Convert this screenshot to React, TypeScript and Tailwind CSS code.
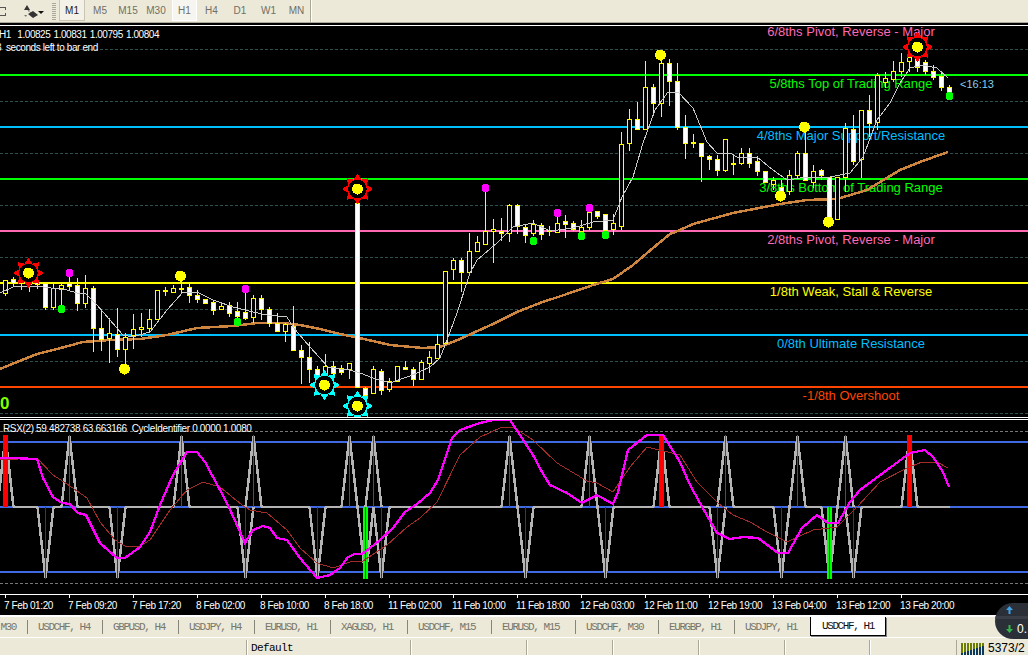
import React from "react";

type C = [number, number, number, number, number];
// high, low, bodyTop, bodyBottom, white(1)/hollow(0); bar i sits at x = 5 + 8i
const candles: C[] = [
  [280, 296, 280, 293, 0], [277, 286, 279, 283, 1], [274, 290, 278, 283, 1], [272, 292, 280, 284, 0], [282, 289, 282, 284, 1],
  [283, 310, 283, 307, 1], [283, 310, 288, 307, 0], [283, 307, 285, 288, 0], [273, 290, 283, 286, 1], [278, 311, 285, 303, 1],
  [275, 308, 288, 303, 0], [286, 352, 288, 328, 1], [309, 351, 328, 339, 1], [318, 363, 333, 338, 0], [308, 357, 334, 349, 1],
  [333, 369, 337, 349, 0], [314, 349, 329, 335, 0], [313, 337, 327, 329, 0], [309, 332, 319, 328, 0], [290, 319, 290, 319, 0],
  [287, 296, 290, 291, 0], [285, 292, 288, 292, 0], [276, 293, 288, 289, 0], [284, 303, 287, 295, 1], [290, 303, 295, 299, 1],
  [299, 303, 299, 303, 1], [301, 315, 302, 310, 1], [302, 309, 306, 309, 0], [302, 317, 305, 313, 1], [302, 320, 311, 316, 1],
  [289, 320, 312, 318, 1], [295, 323, 298, 317, 0], [295, 320, 298, 309, 1], [307, 327, 309, 323, 1], [313, 331, 323, 331, 1],
  [323, 342, 324, 331, 0], [306, 351, 326, 350, 1], [345, 384, 350, 357, 1], [342, 383, 357, 369, 1], [366, 383, 369, 376, 1],
  [354, 380, 366, 373, 0], [361, 380, 366, 373, 1], [365, 375, 368, 372, 1], [363, 379, 363, 369, 0], [203, 387, 203, 387, 1],
  [387, 395, 388, 395, 1], [366, 393, 369, 393, 0], [369, 395, 371, 390, 1], [378, 392, 381, 389, 0], [366, 381, 366, 381, 0],
  [361, 369, 367, 369, 1], [367, 386, 369, 379, 1], [360, 379, 362, 379, 0], [351, 373, 357, 363, 0], [334, 358, 344, 358, 0],
  [271, 343, 271, 343, 0], [258, 280, 260, 269, 0], [258, 292, 260, 272, 1], [233, 273, 251, 272, 0], [236, 251, 242, 251, 0],
  [188, 244, 231, 244, 0], [219, 263, 229, 231, 0], [218, 241, 231, 233, 1], [204, 242, 205, 233, 0], [204, 234, 205, 226, 1],
  [224, 243, 227, 235, 1], [220, 236, 224, 233, 0], [223, 240, 225, 234, 1], [226, 236, 230, 231, 0], [213, 233, 223, 232, 0],
  [215, 238, 221, 224, 1], [221, 231, 223, 229, 1], [220, 236, 227, 231, 0], [208, 230, 212, 227, 0], [211, 219, 211, 216, 1],
  [214, 235, 214, 230, 1], [214, 235, 223, 229, 0], [132, 230, 144, 226, 0], [109, 151, 119, 143, 0], [102, 129, 119, 129, 1],
  [61, 129, 87, 129, 0], [84, 115, 87, 103, 1], [55, 117, 63, 103, 0], [59, 106, 63, 81, 1], [63, 130, 81, 127, 1],
  [115, 159, 127, 143, 1], [134, 148, 142, 143, 0], [143, 182, 143, 156, 1], [155, 170, 156, 159, 1], [155, 176, 159, 170, 1],
  [139, 172, 139, 170, 0], [155, 175, 163, 163, 0], [148, 165, 153, 163, 0], [148, 168, 153, 163, 1], [156, 176, 161, 171, 1],
  [171, 182, 171, 182, 1], [177, 190, 180, 184, 0], [180, 196, 187, 191, 1], [170, 195, 175, 191, 0], [151, 178, 153, 175, 0],
  [127, 180, 153, 180, 1], [165, 188, 171, 182, 0], [169, 180, 170, 175, 1], [177, 222, 177, 220, 1], [177, 219, 177, 219, 0],
  [123, 192, 128, 177, 0], [115, 165, 129, 161, 1], [110, 178, 110, 159, 0], [95, 137, 110, 123, 1], [73, 130, 75, 122, 0],
  [72, 88, 78, 82, 0], [61, 82, 71, 79, 0], [53, 77, 62, 71, 0], [43, 72, 57, 61, 0], [47, 72, 50, 67, 1],
  [60, 75, 62, 71, 1], [65, 80, 71, 77, 1], [72, 91, 76, 87, 1], [85, 96, 87, 93, 1],
];

const thinMA = "0,293 13,287 22,286 43,287 67,290 77,293 85,293 97,305 110,320 123,335 132,337 150,332 167,310 183,292 197,292 213,300 233,307 253,312 267,315 287,317 293,327 310,347 328,367 340,369 350,370 360,373 373,378 390,383 410,376 430,367 440,358 447,340 457,313 470,273 477,260 497,243 513,227 533,223 550,231 573,228 593,222 613,220 622,197 633,177 643,143 655,110 668,92 678,92 693,108 707,142 717,153 730,153 737,157 757,157 773,170 787,180 807,177 830,177 850,173 863,157 877,120 890,103 900,83 910,68 923,65 937,68 948,78";
const slowMA = "0,369 17,362 37,354 57,349 83,342 110,340 140,339 167,335 197,328 233,326 257,323 283,323 300,325 320,329 340,334 373,341 390,345 423,348 440,347 460,339 473,333 493,324 517,312 540,303 567,294 593,285 613,279 633,265 653,248 670,234 680,230 693,224 733,213 780,204 807,200 837,199 867,190 900,170 920,162 948,152";
const rsx = "0,458 10,458 37,459 43,478 53,497 62,503 70,504 78,513 86,515 100,543 117,558 125,558 140,547 150,532 160,505 173,475 187,452 197,452 205,462 227,503 245,543 253,530 263,526 270,528 277,538 287,540 300,558 317,578 330,575 340,568 348,557 355,554 362,554 370,548 380,540 393,528 405,512 417,504 430,493 438,480 452,438 460,430 480,423 493,420 510,420 520,435 533,455 542,472 550,485 567,493 582,503 597,495 613,504 618,492 628,450 647,435 663,435 680,462 690,485 700,503 717,533 730,539 743,537 758,538 778,553 788,553 802,528 817,515 828,523 838,523 850,502 860,490 883,473 910,453 925,450 933,457 943,472 949,487";
const signal = "0,460 37,458 53,475 67,484 87,498 100,522 115,540 125,546 140,546 150,540 170,510 187,490 203,482 220,487 242,505 250,510 267,513 287,530 300,548 317,563 333,568 350,562 363,561 387,545 407,527 420,518 437,502 460,455 480,437 500,428 513,427 533,440 557,463 587,481 597,483 613,492 630,467 647,447 680,455 697,482 718,503 733,515 750,522 767,532 787,542 813,530 837,527 857,507 880,482 907,468 922,462 937,462 948,468";

const levels = [
  { y: 74, c: "#00ff00" }, { y: 126, c: "#00bfff" }, { y: 178, c: "#00ff00" }, { y: 230, c: "#ff69b4" },
  { y: 282, c: "#ffff00" }, { y: 334, c: "#00bfff" }, { y: 386, c: "#ff4500" },
];
const labels = [
  { t: "6/8ths Pivot, Reverse - Major", y: 36, c: "#ff69b4" },
  { t: "5/8ths Top of Trading Range", y: 88, c: "#00ff00" },
  { t: "4/8ths Major Support/Resistance", y: 140, c: "#00bfff" },
  { t: "3/8ths Bottom of Trading Range", y: 192, c: "#00ff00" },
  { t: "2/8ths Pivot, Reverse - Major", y: 244, c: "#ff69b4" },
  { t: "1/8th Weak, Stall & Reverse", y: 296, c: "#ffff00" },
  { t: "0/8th Ultimate Resistance", y: 348, c: "#00bfff" },
  { t: "-1/8th Overshoot", y: 400, c: "#ff4500" },
];
const dots = [
  [61, 309, "#00ff00", 4], [69, 273, "#ff00ff", 4], [124, 369, "#ffff00", 5.5], [180, 276, "#ffff00", 5.5], [237, 322, "#00ff00", 4],
  [245, 289, "#ff00ff", 4], [485, 188, "#ff00ff", 4], [533, 241, "#00ff00", 4], [557, 213, "#ff00ff", 4], [581, 236, "#00ff00", 4],
  [589, 208, "#ff00ff", 4], [605, 235, "#00ff00", 4], [660, 55, "#ffff00", 5.5], [780, 196, "#ffff00", 5.5], [804, 127, "#ffff00", 5.5],
  [828, 222, "#ffff00", 5.5], [949, 96, "#00ff00", 4],
] as [number, number, string, number][];
const suns: [number, number, string][] = [
  [28, 273, "#ff0000"], [357, 189, "#ff0000"], [917, 47, "#ff0000"], [324, 385, "#00ffff"], [357, 406, "#00ffff"],
];

function starPoints(cx: number, cy: number) {
  const out: string[] = [];
  for (let i = 0; i < 16; i++) {
    const r = i % 2 === 0 ? 15.5 : 10;
    const a = (i * Math.PI) / 8 - Math.PI / 2;
    out.push(`${cx + r * Math.cos(a)},${cy + r * Math.sin(a)}`);
  }
  return out.join(" ");
}

const upTops = [5, 69, 181, 253, 349, 373, 509, 589, 661, 725, 797, 845, 909];
const downTips = [45, 117, 245, 317, 365, 381, 525, 605, 717, 781, 829, 853];
const ticks = [
  [5, "7 Feb 01:20"], [69, "7 Feb 09:20"], [133, "7 Feb 17:20"], [197, "8 Feb 02:00"], [261, "8 Feb 10:00"],
  [325, "8 Feb 18:00"], [389, "11 Feb 02:00"], [453, "11 Feb 10:00"], [517, "11 Feb 18:00"], [581, "12 Feb 03:00"],
  [645, "12 Feb 11:00"], [709, "12 Feb 19:00"], [773, "13 Feb 04:00"], [837, "13 Feb 12:00"], [901, "13 Feb 20:00"],
] as [number, string][];
const tabs: [string, number][] = [
  ["USDCHF, H4", 75], ["GBPUSD, H4", 76], ["USDJPY, H4", 76], ["EURUSD, H1", 76], ["XAGUSD, H1", 77],
  ["USDCHF, M15", 84], ["EURUSD, M15", 84], ["USDCHF, M30", 83], ["EURGBP, H1", 76], ["USDJPY, H1", 76],
];
const periods: [string, string][] = [
  ["M5", "w-[28px]"], ["M15", "w-[28px]"], ["M30", "w-[28px]"],
];
const periods2: [string, string][] = [
  ["H4", "w-[29px]"], ["D1", "w-[28px]"], ["W1", "w-[29px]"], ["MN", "w-[27px]"],
];
const cols = ["w-[246px]", "w-[164px]", "w-[116px]", "w-[86px]", "w-[86px]", "w-[86px]", "w-[85px]", "w-[87px]"];

const sans = "font-['Liberation_Sans',Arial,sans-serif]";

function Toolbar() {
  return (
    <div className={`flex h-[23px] shrink-0 items-start border-b border-[#aca899] bg-[#ece9d8] text-[10px] text-[#716f64] ${sans}`}>
      <div className="mt-[7px] h-[9px] w-[6px] border-y border-r border-dashed border-[#555]" />
      <svg className="ml-[14px] mt-[3px] h-[16px] w-[24px]" viewBox="0 0 24 16">
        <path d="M6 5l6 6" fill="none" stroke="#888" strokeWidth="1.5" strokeDasharray="2 1" />
        <path d="M4 7l3-5 3 5zM8 11l5-3 5 4-5 3z" fill="#333" />
        <path d="M4 12l3 0-1 2z" fill="#777" />
        <path d="M18 8h6l-3 3z" fill="#111" />
      </svg>
      <div className="ml-[8px] mt-[2px] h-[18px] w-[4px] bg-[repeating-linear-gradient(0deg,#aca899_0,#aca899_1px,#ece9d8_1px,#ece9d8_2px)]" />
      <div className="ml-[3px] flex h-[21px] w-[26px] items-center justify-center border border-t-0 border-[#c8c5b2] bg-[#f4f2e8] text-[#222]">M1</div>
      {periods.map(([t, w]) => (
        <div key={t} className={`flex h-[21px] items-center justify-center pl-[2px] ${w}`}>{t}</div>
      ))}
      <div className="ml-[3px] flex h-[21px] w-[25px] items-center justify-center border border-t-0 border-white bg-[#f6f5ef]">H1</div>
      {periods2.map(([t, w]) => (
        <div key={t} className={`flex h-[21px] items-center justify-center ${w}`}>{t}</div>
      ))}
      <div className="h-[22px] w-[2px] border-l border-r border-l-[#aca899] border-r-white" />
    </div>
  );
}

function MainChart() {
  return (
    <div className="relative h-[391px] shrink-0 overflow-hidden bg-black">
      <svg className="block h-[391px] w-[1028px]" viewBox="0 26 1028 391" shapeRendering="crispEdges">
        {[49, 101, 153, 205, 257, 309, 361, 413].map((y) => (
          <line key={y} x1="0" x2="1028" y1={y + 0.5} y2={y + 0.5} stroke="#2f4f4f" strokeDasharray="3 2" />
        ))}
        {levels.map((l) => (
          <rect key={l.y} x="0" y={l.y} width="1028" height="2" fill={l.c} />
        ))}
        {labels.map((l) => (
          <text key={l.t} x="851" y={l.y} textAnchor="middle" fill={l.c} fontSize="13" fontFamily="'Liberation Sans',Arial,sans-serif">
            {l.t}
          </text>
        ))}
        <text x="960" y="88" fill="#87ceeb" fontSize="11" fontFamily="'Liberation Sans',Arial,sans-serif">&lt;16:13</text>
        <text x="0" y="409" fill="#7fff00" fontSize="17" fontWeight="bold" fontFamily="'Liberation Sans',Arial,sans-serif">0</text>
        <polyline points={slowMA} fill="none" stroke="#cd853f" strokeWidth="2.5" />
        {candles.map((c, i) => {
          const x = 5 + 8 * i;
          return (
            <g key={i}>
              <line x1={x + 0.5} x2={x + 0.5} y1={c[0]} y2={c[1]} stroke="#ffff00" />
              <rect x={x - 1.5} y={c[2] + 0.5} width="4" height={Math.max(c[3] - c[2], 1)} fill={c[4] ? "#ffffff" : "#000000"} stroke="#ffff00" />
            </g>
          );
        })}
        <polyline points={thinMA} fill="none" stroke="#c8c8c8" strokeWidth="1" />
        {dots.map(([x, y, c, r], i) => (
          <circle key={i} cx={x + 0.5} cy={y} r={r} fill={c} />
        ))}
        {suns.map(([x, y, c], i) => (
          <g key={i}>
            <polygon points={starPoints(x + 0.5, y)} fill={c} />
            <circle cx={x + 0.5} cy={y} r="9.3" fill="#000" />
            <circle cx={x + 0.5} cy={y} r="5.5" fill="#ffff00" />
          </g>
        ))}
      </svg>
      <div className={`absolute left-[-1px] top-[2px] text-[10px] leading-[13px] tracking-[-0.45px] text-white ${sans}`}>
        <div className="whitespace-pre [word-spacing:0.9px]">H1  1.00825 1.00831 1.00795 1.00804</div>
        <div className="ml-[-3px] whitespace-pre tracking-[-0.4px]">3  seconds left to bar end</div>
      </div>
    </div>
  );
}

function IndicatorPanel() {
  return (
    <div className="relative h-[174px] shrink-0 overflow-hidden bg-black">
      <svg className="block h-[174px] w-[1028px]" viewBox="0 420 1028 174" shapeRendering="crispEdges">
        {[431, 583].map((y) => (
          <line key={y} x1="0" x2="1028" y1={y + 0.5} y2={y + 0.5} stroke="#777" strokeDasharray="3 2" />
        ))}
        {[441, 506, 571].map((y) => (
          <rect key={y} x="0" y={y} width="1028" height="2" fill="#4169e1" />
        ))}
        <rect x="0" y="506" width="950" height="2" fill="#b4b4b4" />
        {[...upTops, ...downTips].map((x) => (
          <rect key={x} x={x - 7} y="506" width="15" height="2" fill="#4169e1" />
        ))}
        {upTops.map((x) => (
          <g key={x}>
            <polyline points={`${x - 7.5},507 ${x + 0.5},436 ${x + 8.5},507`} fill="none" stroke="#b4b4b4" strokeWidth="2.5" />
            <line x1={x + 0.5} x2={x + 0.5} y1="435" y2="507" stroke="#a52a2a" />
          </g>
        ))}
        {downTips.map((x) => (
          <g key={x}>
            <polyline points={`${x - 7.5},507 ${x + 0.5},578 ${x + 8.5},507`} fill="none" stroke="#b4b4b4" strokeWidth="2.5" />
            <line x1={x + 0.5} x2={x + 0.5} y1="507" y2="579" stroke="#006400" />
          </g>
        ))}
        {[5, 661, 909].map((x) => (
          <rect key={x} x={x - 2} y="435" width="5" height="72" fill="#ff0000" />
        ))}
        {[365, 829].map((x) => (
          <g key={x}>
            <rect x={x - 2} y="507" width="5" height="72" fill="#00ff00" />
            <rect x={x} y="507" width="1" height="72" fill="#006400" />
          </g>
        ))}
        <polyline points={signal} fill="none" stroke="#a52a2a" strokeWidth="1" />
        <polyline points={rsx} fill="none" stroke="#ff00ff" strokeWidth="2.3" />
      </svg>
      <div className={`absolute left-[3px] top-[2px] whitespace-pre text-[10px] leading-[13px] tracking-[-0.35px] text-white ${sans}`}>
        RSX(2) 59.482738 63.663166  CycleIdentifier 0.0000 1.0080
      </div>
    </div>
  );
}

function TimeAxis() {
  return (
    <div className={`flex h-[21px] shrink-0 items-start border-t border-white bg-black text-[10px] tracking-[-0.4px] text-white ${sans}`}>
      <div className="w-[5px] shrink-0" />
      {ticks.map(([x, t]) => (
        <div key={x} className="w-[64px] shrink-0">
          <div className="h-[3px] w-px bg-white" />
          <div className="ml-[-1px] mt-[1px] whitespace-pre leading-[13px]">{t}</div>
        </div>
      ))}
    </div>
  );
}

function Tabs() {
  return (
    <div className="flex h-[20px] shrink-0 items-center overflow-hidden bg-[#ece9d8] font-['Liberation_Mono',monospace] text-[11px] tracking-[-1.4px] text-[#77776c]">
      <div className="flex h-full w-[27px] shrink-0 items-center justify-end pr-[11px]">M30</div>
      {tabs.map(([t, w]) => (
        <div key={t} className="flex h-full shrink-0 items-center" style={{ width: w }}>
          <div className="h-[14px] w-px shrink-0 bg-[#85857a]" />
          <div className="ml-[10px] whitespace-pre">{t}</div>
        </div>
      ))}
      <div className="flex h-[19px] w-[76px] shrink-0 items-center justify-center self-start border-x border-b border-black bg-white text-[#111] shadow-[1px_1px_0_#808080]">
        USDCHF, H1
      </div>
    </div>
  );
}

function StatusBar() {
  return (
    <div className="flex h-[18px] shrink-0 border-t border-white bg-[#ece9d8] pt-[2px] text-black">
      {cols.map((w, i) => (
        <div
          key={i}
          className={`h-full shrink-0 ${w} ${i === 0 ? "" : "border-l border-l-[#aca899] shadow-[inset_1px_0_0_#fff]"} pl-[4px] font-['Liberation_Mono',monospace] text-[11px] leading-[16px] tracking-[-0.6px]`}
        >
          {i === 1 ? "Default" : ""}
        </div>
      ))}
      <div className={`flex flex-1 items-start gap-[4px] border-l border-l-[#aca899] pl-[4px] pt-[1px] text-[12px] leading-[14px] ${sans}`}>
        <svg className="h-[14px] w-[23px] shrink-0" viewBox="0 0 23 14" shapeRendering="crispEdges">
          {[0, 1, 2, 3, 4, 5, 6, 7].map((i) => (
            <g key={i}>
              <rect x={i * 3} y="2" width="2" height={10 - i} fill="#6b7d00" />
              <rect x={i * 3} y={12 - i} width="2" height={i + 2} fill="#0c3a5e" />
            </g>
          ))}
        </svg>
        <span>5373/2</span>
      </div>
    </div>
  );
}

export default function App() {
  return (
    <div className="relative h-[655px] w-[1028px] overflow-hidden bg-black">
      <Toolbar />
      <div className="h-[2px] bg-black" />
      <div className="h-px bg-white" />
      <MainChart />
      <div className="h-px bg-white" />
      <div className="h-px bg-black" />
      <div className="h-px bg-white" />
      <IndicatorPanel />
      <TimeAxis />
      <div className="h-[2px] bg-white" />
      <Tabs />
      <StatusBar />
      {/* floating network widget lying over the corner */}
      <div className={`absolute left-[995px] top-[603px] flex h-[36px] w-[40px] flex-col overflow-hidden rounded-l-[18px] bg-[#2b3038] ${sans}`}>
        <div className="flex h-[16px] items-center border-b-[3px] border-b-[#3a3f47] pl-[11px]">
          <svg className="h-[8px] w-[7px]" viewBox="0 0 7 8"><path d="M3.5 0L7 4H4.5V8H2.5V4H0z" fill="#3fa2e8" /></svg>
        </div>
        <div className="flex flex-1 items-center gap-[4px] pl-[11px] text-[12px] text-white">
          <svg className="h-[8px] w-[7px]" viewBox="0 0 7 8"><path d="M3.5 8L0 4H2.5V0H4.5V4H7z" fill="#35b548" /></svg>
          <span>0.</span>
        </div>
      </div>
    </div>
  );
}
